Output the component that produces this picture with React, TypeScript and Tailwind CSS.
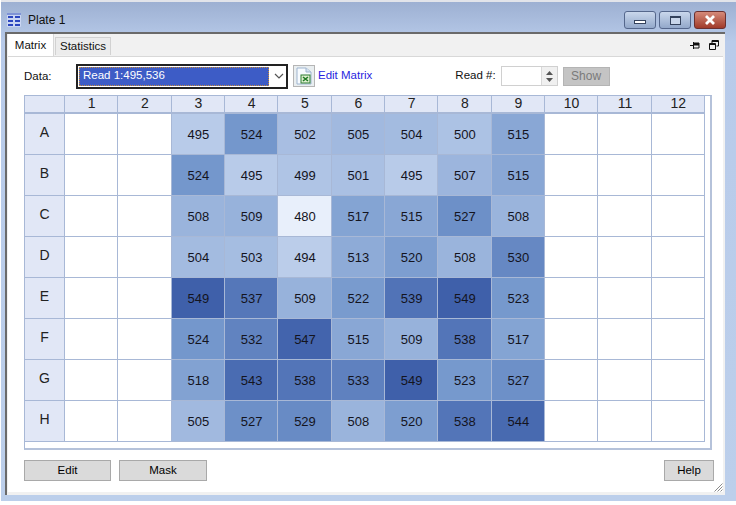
import React from 'react';

const font = "font-['Liberation_Sans',Arial,sans-serif]";

const rows: [string, number[]][] = [
  ['A', [495, 524, 502, 505, 504, 500, 515]],
  ['B', [524, 495, 499, 501, 495, 507, 515]],
  ['C', [508, 509, 480, 517, 515, 527, 508]],
  ['D', [504, 503, 494, 513, 520, 508, 530]],
  ['E', [549, 537, 509, 522, 539, 549, 523]],
  ['F', [524, 532, 547, 515, 509, 538, 517]],
  ['G', [518, 543, 538, 533, 549, 523, 527]],
  ['H', [505, 527, 529, 508, 520, 538, 544]],
];

// colour stops read off the picture: value, r, g, b
const stops = [
  [480, 232, 239, 251],
  [495, 184, 203, 233],
  [524, 116, 151, 204],
  [537, 85, 119, 185],
  [549, 63, 96, 170],
];

function heat(v: number) {
  let i = 0;
  while (i < stops.length - 2 && v > stops[i + 1][0]) i++;
  const a = stops[i];
  const b = stops[i + 1];
  const t = (v - a[0]) / (b[0] - a[0]);
  const mix = (k: number) => Math.round(a[k] + (b[k] - a[k]) * t);
  return `rgb(${mix(1)},${mix(2)},${mix(3)})`;
}

const cols = Array.from({ length: 12 }, (_, i) => i + 1);

function Cell({ value }: { value?: number }) {
  return (
    <div
      className="flex items-center justify-center border-r border-b border-[#a8b8d6] bg-white pt-[1px] pl-[1px] text-[13px] text-[#14141e]"
      style={value ? { backgroundColor: heat(value) } : undefined}
    >
      {value}
    </div>
  );
}

function Btn({ label, className }: { label: string; className: string }) {
  return (
    <div className={`flex h-[21px] items-center justify-center border border-[#a9a9a9] bg-[#dadada] pt-[1px] text-[11.5px] text-black ${className}`}>
      {label}
    </div>
  );
}

const winBtn = 'flex h-[18px] w-[32px] rounded-[3px] border bg-gradient-to-b';

export default function App() {
  return (
    <div className={`h-[505px] w-[736px] overflow-hidden bg-white ${font}`}>
      <div className="ml-[1px] flex h-[501px] w-[735px] flex-col border-t-2 border-[#e2e4ea] bg-gradient-to-b from-[#9db0d2] via-[#b8cbea] via-[8%] to-[#bccfeb]">
        {/* title bar */}
        <div className="flex h-[30px] shrink-0 items-center pl-[6px] pr-[10px] pt-[6px]">
          <svg width="14" height="14" viewBox="0 0 14 14" className="mr-[7px]">
            <rect x="0" y="0" width="14" height="14" rx="1" fill="#c9d5f2" />
            <rect x="0" y="0" width="14" height="2" fill="#7f93d6" />
            <rect x="1" y="3" width="5" height="2" fill="#2b46bf" />
            <rect x="8" y="3" width="5" height="2" fill="#2b46bf" />
            <rect x="1" y="7" width="5" height="2" fill="#2b46bf" />
            <rect x="8" y="7" width="5" height="2" fill="#2b46bf" />
            <rect x="1" y="11" width="5" height="2" fill="#2b46bf" />
            <rect x="8" y="11" width="5" height="2" fill="#2b46bf" />
          </svg>
          <span className="text-[12px] text-[#111]">Plate 1</span>
          <div className="ml-auto flex items-center gap-[3px]">
            <div className={`${winBtn} items-end justify-center border-[#55678c] from-[#c9d7ec] to-[#93a8ca] pb-[4px]`}>
              <div className="h-[4px] w-[12px] border border-[#34425c] bg-white" />
            </div>
            <div className={`${winBtn} items-center justify-center border-[#55678c] from-[#c9d7ec] to-[#93a8ca]`}>
              <div className="h-[9px] w-[11px] border border-t-2 border-[#34425c] bg-[#c9d6ea]" />
            </div>
            <div className={`${winBtn} items-center justify-center border-[#6b3030] from-[#d58a7a] to-[#a03a2a]`}>
              <svg width="14" height="10" viewBox="0 0 14 10">
                <path d="M3 1 L11 9 M11 1 L3 9" stroke="#fff" strokeWidth="2.8" />
              </svg>
            </div>
          </div>
        </div>

        {/* window body */}
        <div className="relative ml-[4px] mr-[11px] flex h-[463px] flex-col border-t-2 border-l-2 border-[#6a6a6a] bg-[#f1f1f1] pr-[1px]">
          {/* tabs */}
          <div className="relative flex h-[22px] shrink-0 items-end pl-[1px] text-[11.5px]">
            <div className="z-10 flex h-[22px] w-[46px] items-center justify-center border-r border-[#d8d8d8] bg-white pt-[1px] text-[#111]">Matrix</div>
            <div className="mb-[1px] ml-px flex h-[18px] w-[56px] items-center justify-center border border-b-0 border-[#d2d2d2] bg-[#ececec] text-[#111]">Statistics</div>
            <div className="mb-[6px] ml-auto mr-[5px] flex items-center gap-[9px]">
              <svg width="10" height="9" viewBox="0 0 10 9">
                <path d="M0 4.5 H3 M3.5 1 V8 M3.5 2 H9 V7 H3.5" stroke="#111" fill="none" />
                <rect x="4" y="2" width="5" height="2.5" fill="#111" />
              </svg>
              <svg width="10" height="10" viewBox="0 0 10 10">
                <path d="M3 3 V0.5 H9.5 V6 H7.5 M3 1.5 H9.5" stroke="#111" fill="none" />
                <path d="M0.5 3.5 H6.5 V9.5 H0.5 Z M0.5 4.5 H6.5" stroke="#111" fill="none" />
              </svg>
            </div>
          </div>

          <div className="mx-[1px] mb-[3px] flex min-h-0 flex-1 flex-col border-t border-[#d8d8d8] bg-white pl-[16px] pr-[7px]">
            {/* toolbar */}
            <div className="flex h-[38px] shrink-0 items-center text-[11.5px] text-[#111]">
              <span className="w-[52px] pt-[1px]">Data:</span>
              <div className="flex h-[25px] w-[212px] items-center border-2 border-[#222] bg-white">
                <div className="ml-[1px] flex h-[19px] w-[190px] items-center border border-dotted border-[#c58a3a] bg-[#3d5cc6] pl-[3px] text-white">
                  Read 1:495,536
                </div>
                <svg width="10" height="6" viewBox="0 0 10 6" className="ml-[5px]">
                  <path d="M1 1 L5 5 L9 1" stroke="#555" strokeWidth="1.2" fill="none" />
                </svg>
              </div>
              <div className="ml-[5px] flex h-[22px] w-[22px] items-center justify-center border border-[#b5b5b5] bg-[#e9eef0]">
                <svg width="16" height="18" viewBox="0 0 16 18">
                  <path d="M1 1 H10 L15 5 V17 H1 Z" fill="#f7fbff" stroke="#9fb5cf" />
                  <path d="M10 1 V5 H15" fill="#d5e2f0" stroke="#9fb5cf" />
                  <rect x="5" y="8" width="9" height="8" fill="#dff0d0" stroke="#2f7d32" />
                  <path d="M7 10 L12 14 M12 10 L7 14" stroke="#1f7a24" strokeWidth="1.6" />
                </svg>
              </div>
              <span className="ml-[3px] text-[#2a1fe0]">Edit Matrix</span>
              <span className="ml-[83px]">Read #:</span>
              <div className="ml-[5px] flex h-[20px] w-[57px] border border-[#d0d0d0] bg-white">
                <div className="flex-1" />
                <div className="flex w-[16px] flex-col items-center justify-center gap-[3px] border-l border-[#d8d8d8] bg-[#f0f0f0]">
                  <svg width="7" height="4" viewBox="0 0 7 4"><path d="M3.5 0 L7 4 H0 Z" fill="#555" /></svg>
                  <svg width="7" height="4" viewBox="0 0 7 4"><path d="M0 0 H7 L3.5 4 Z" fill="#555" /></svg>
                </div>
              </div>
              <div className="ml-[5px] flex h-[19px] w-[47px] items-center justify-center border border-[#b4b4b4] bg-[#c4c4c4] text-[12px] text-[#7a7a7a]">Show</div>
            </div>

            {/* matrix */}
            <div className="flex h-[355px] w-[688px] shrink-0 flex-col border-t border-r-2 border-b-2 border-l border-[#a8b8d6] border-r-[#b5c2da] border-b-[#b5c2da]">
              <div className="grid grid-cols-[40px_repeat(12,53.33px)] grid-rows-[18px_repeat(8,41px)]">
                <div className="border-r border-b-2 border-[#a8b8d6] bg-[#e1e7f6]" />
                {cols.map((c) => (
                  <div key={c} className="flex items-center justify-center border-r border-b-2 border-[#a8b8d6] bg-[#e1e7f6] pb-[1px] pl-[1px] text-[14px] text-[#222]">
                    {c}
                  </div>
                ))}
                {rows.map(([name, vals]) => (
                  <React.Fragment key={name}>
                    <div className="flex items-center justify-center border-r border-b border-[#a8b8d6] bg-[#e1e7f6] pb-[3px] text-[14px] text-[#222]">
                      {name}
                    </div>
                    <Cell />
                    <Cell />
                    {vals.map((v, i) => (
                      <Cell key={i} value={v} />
                    ))}
                    <Cell />
                    <Cell />
                    <Cell />
                  </React.Fragment>
                ))}
              </div>
            </div>

            {/* footer buttons */}
            <div className="mt-[10px] flex items-start">
              <Btn label="Edit" className="w-[87px]" />
              <Btn label="Mask" className="ml-[8px] w-[88px]" />
              <Btn label="Help" className="ml-auto mr-[2px] w-[50px]" />
            </div>
          </div>

          {/* resize grip */}
          <svg width="9" height="9" viewBox="0 0 9 9" className="absolute bottom-[3px] right-[2px]">
            <path d="M0.5 8.5 L8.5 0.5 M3.5 8.5 L8.5 3.5 M6.5 8.5 L8.5 6.5" stroke="#8a8a8a" fill="none" />
          </svg>
        </div>
      </div>
    </div>
  );
}
